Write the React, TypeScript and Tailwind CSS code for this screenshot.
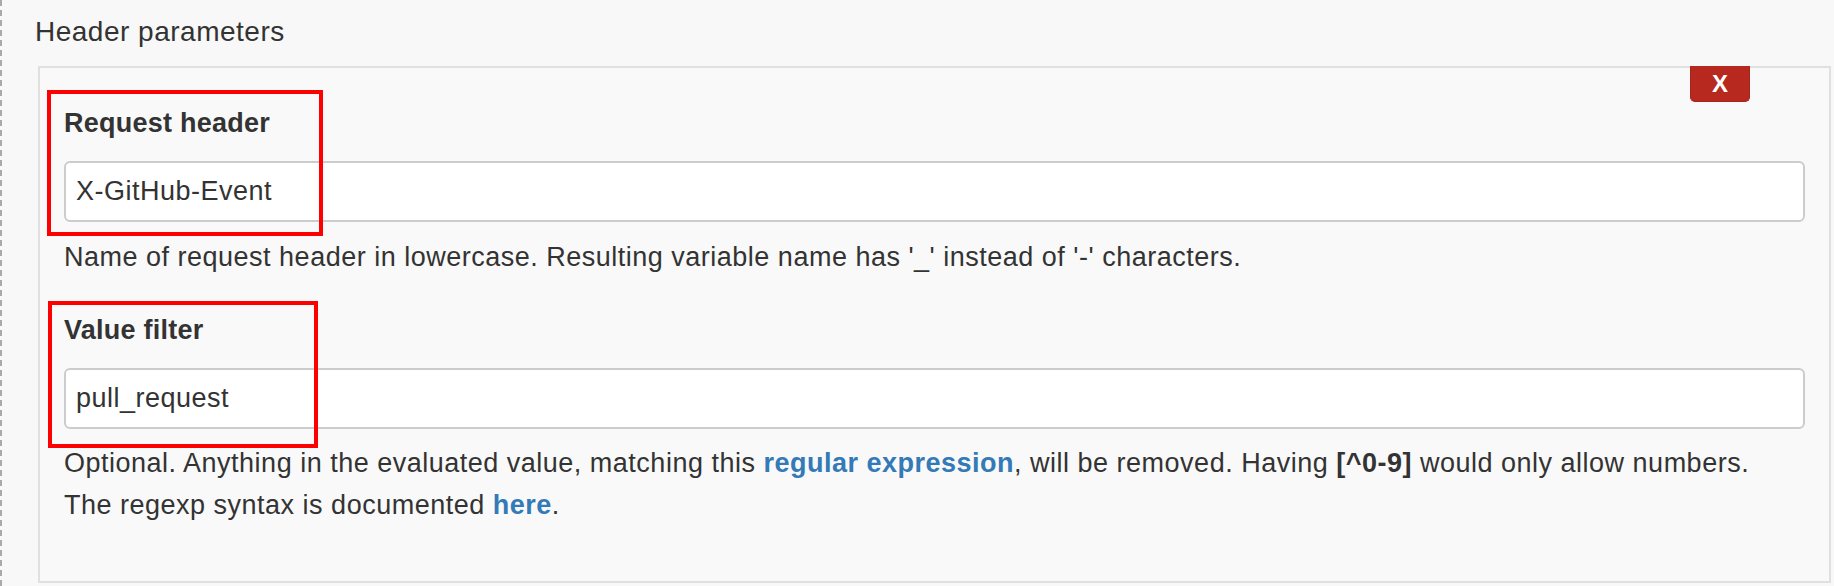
import React from "react";

// ─── Form field ──────────────────────────────────────────────────────────────
const Field = ({
  label,
  value,
  className,
  children,
}: {
  label: string;
  value: string;
  className?: string;
  children: React.ReactNode;
}) => (
  <div className={className}>
    <div className="font-bold leading-[37px] tracking-[0.25px]">{label}</div>
    <input
      readOnly
      value={value}
      className="mt-[19px] block h-[61px] w-full rounded-[6px] border-2 border-[#cccccc] bg-white px-[10px] text-[27px] tracking-[0.5px] text-[#333] outline-none"
      style={{ fontFamily: "inherit" }}
    />
    <div className="leading-[42px]">{children}</div>
  </div>
);

// ─── Main ────────────────────────────────────────────────────────────────────
export default function App() {
  return (
    <div
      className="h-[586px] w-[1834px] overflow-hidden border-l-2 border-dashed border-[#aaaaaa] bg-[#f8f8f8] pl-[33px] pr-[3px] text-[27px] tracking-[0.5px] text-[#333]"
      style={{ fontFamily: '"Liberation Sans", Arial, Helvetica, sans-serif' }}
    >
      <div className="pt-[13px] text-[28px] leading-[37px]">Header parameters</div>

      <div className="relative ml-[3px] mt-[16px] border-2 border-[#e0e0e0] bg-[#f9f9f9] px-[24px] pb-[55px] pt-[37px]">
        {/* Delete button */}
        <button className="absolute -top-[2px] right-[79px] flex h-[36px] w-[60px] items-center justify-center rounded-b-[5px] border border-t-0 border-[#a5241b] bg-[#b7281e] text-[24px] font-bold leading-none tracking-normal text-white">
          X
        </button>

        <Field label="Request header" value="X-GitHub-Event">
          <p className="mt-[14px]">
            Name of request header in lowercase. Resulting variable name has '_' instead of '-'
            characters.
          </p>
        </Field>

        <Field label="Value filter" value="pull_request" className="mt-[34px]">
          <p className="mt-[13px]">
            Optional. Anything in the evaluated value, matching this{" "}
            <a className="font-bold text-[#337ab7]">regular expression</a>, will be removed.
            Having <b>[^0-9]</b> would only allow numbers.
            <br />
            The regexp syntax is documented <a className="font-bold text-[#337ab7]">here</a>.
          </p>
        </Field>

        {/* Annotation boxes */}
        <div className="pointer-events-none absolute left-[7px] top-[22px] h-[146px] w-[276px] border-4 border-[#ff0000]" />
        <div className="pointer-events-none absolute left-[8px] top-[233px] h-[147px] w-[270px] border-4 border-[#ff0000]" />
      </div>
    </div>
  );
}
